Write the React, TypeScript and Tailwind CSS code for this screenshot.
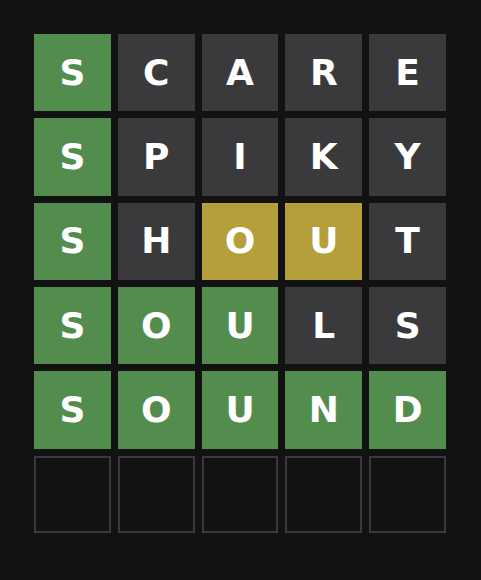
import React from "react";

const rows: { l: string; s: "g" | "y" | "d" }[][] = [
  [
    { l: "S", s: "g" },
    { l: "C", s: "d" },
    { l: "A", s: "d" },
    { l: "R", s: "d" },
    { l: "E", s: "d" },
  ],
  [
    { l: "S", s: "g" },
    { l: "P", s: "d" },
    { l: "I", s: "d" },
    { l: "K", s: "d" },
    { l: "Y", s: "d" },
  ],
  [
    { l: "S", s: "g" },
    { l: "H", s: "d" },
    { l: "O", s: "y" },
    { l: "U", s: "y" },
    { l: "T", s: "d" },
  ],
  [
    { l: "S", s: "g" },
    { l: "O", s: "g" },
    { l: "U", s: "g" },
    { l: "L", s: "d" },
    { l: "S", s: "d" },
  ],
  [
    { l: "S", s: "g" },
    { l: "O", s: "g" },
    { l: "U", s: "g" },
    { l: "N", s: "g" },
    { l: "D", s: "g" },
  ],
];

const bg = { g: "bg-[#538d4e]", y: "bg-[#b59f3b]", d: "bg-[#3a3a3c]" };

export default function App() {
  return (
    <div className="min-h-[580px] w-full bg-[#121213] pl-[34px] pt-[34px]">
      <div
        className="grid h-[499px] w-[412px] grid-cols-5 grid-rows-6 gap-[7px]"
        style={{ fontFamily: '"DejaVu Sans", sans-serif' }}
      >
        {rows.flat().map((t, i) => (
          <div
            key={i}
            className={`flex items-center justify-center text-[36px] font-bold leading-none text-white ${bg[t.s]}`}
          >
            {t.l}
          </div>
        ))}
        {[0, 1, 2, 3, 4].map((i) => (
          <div key={"e" + i} className="border-2 border-[#3a3a3c]" />
        ))}
      </div>
    </div>
  );
}
